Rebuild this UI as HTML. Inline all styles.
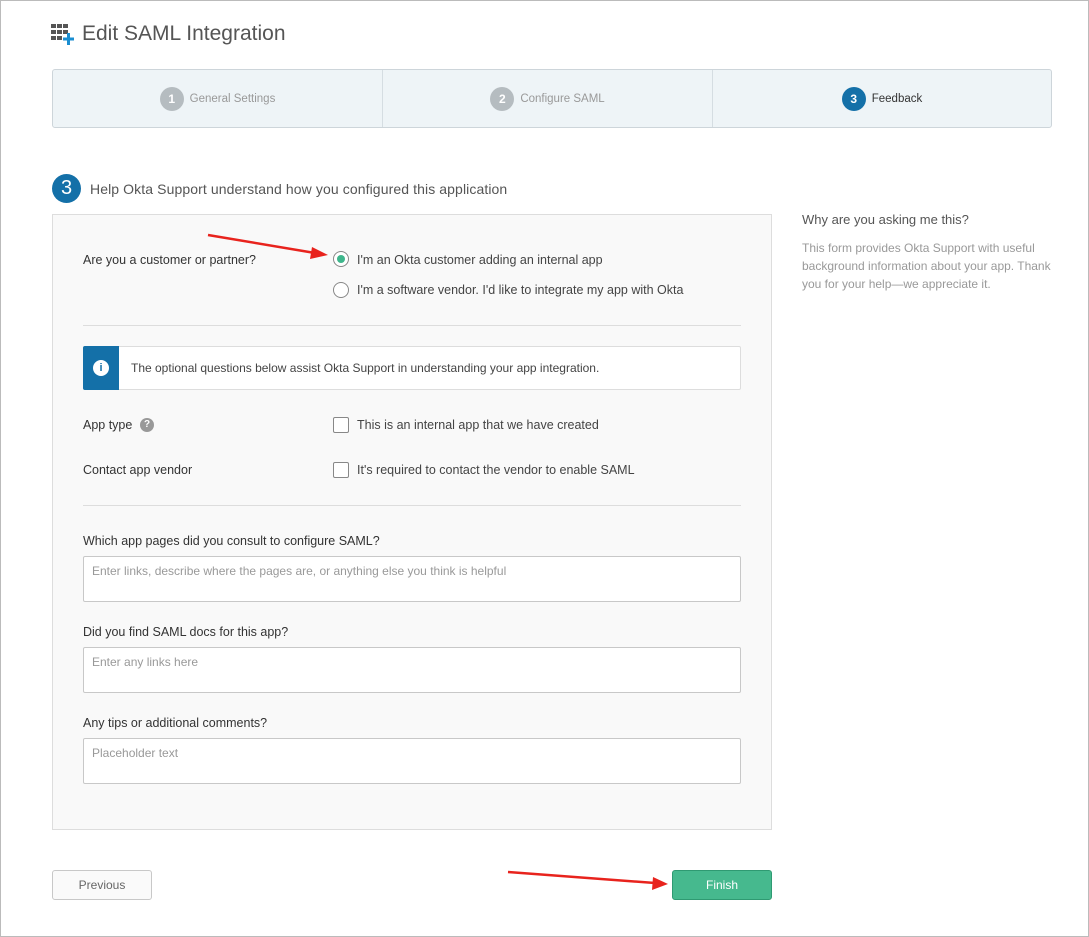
<!DOCTYPE html>
<html><head><style>
*{box-sizing:border-box;margin:0;padding:0}
body{width:1089px;height:937px;background:#fff;font-family:"Liberation Sans",sans-serif;position:relative;overflow:hidden}
.a{position:absolute}
.t{font-size:12.5px;color:#333}
.step{position:absolute;top:0;height:57px;display:flex;align-items:center;justify-content:center;font-size:11.5px;color:#999;border-right:1px solid #d5dde2}
.num{width:24px;height:24px;border-radius:50%;background:#b5bcc0;color:#fff;font-size:12px;font-weight:bold;display:flex;align-items:center;justify-content:center;margin-right:6px}
.radio{position:absolute;width:16px;height:16px;border:1px solid #888;border-radius:50%;background:#fff}
.cb{position:absolute;width:16px;height:16px;border:1px solid #888;background:#fff;border-radius:2px}
.ta{position:absolute;left:83px;width:658px;height:46px;border:1px solid #c8c8c8;background:#fff;border-radius:2px;font-size:12px;color:#999;padding:7px 8px}
.hr{position:absolute;left:83px;width:658px;height:1px;background:#ddd}
.gray{color:#999;font-size:12px}
</style></head><body>
<div class="a" style="left:0;top:0;width:1089px;height:937px;border:1px solid #bbb"></div>
<svg class="a" style="left:51px;top:24px" width="26" height="22"><g fill="#555"><rect x="0" y="0" width="5" height="4"/><rect x="6" y="0" width="5" height="4"/><rect x="12" y="0" width="5" height="4"/><rect x="0" y="6" width="5" height="4"/><rect x="6" y="6" width="5" height="4"/><rect x="12" y="6" width="5" height="4"/><rect x="0" y="12" width="5" height="4"/><rect x="6" y="12" width="5" height="4"/></g><rect x="16" y="9" width="3" height="12" fill="#1a8ed1"/><rect x="12" y="13.5" width="11" height="3" fill="#1a8ed1"/></svg>
<div class="a" style="left:82px;top:22px;font-size:21px;color:#555">Edit SAML Integration</div>
<div class="a" style="left:52px;top:69px;width:1000px;height:59px;background:#eef4f7;border:1px solid #cdd5da;border-radius:3px">
<div class="step" style="left:0;width:330px"><span class="num">1</span>General Settings</div>
<div class="step" style="left:330px;width:330px"><span class="num">2</span>Configure SAML</div>
<div class="step" style="left:660px;width:338px;border-right:none;color:#333"><span class="num" style="background:#1470a8">3</span>Feedback</div>
</div>
<div class="a" style="left:52px;top:174px;width:29px;height:29px;border-radius:50%;background:#1470a8;color:#fff;font-size:20px;display:flex;align-items:center;justify-content:center">3</div>
<div class="a" style="left:90px;top:181px;font-size:14px;color:#555;letter-spacing:0.1px">Help Okta Support understand how you configured this application</div>
<div class="a" style="left:52px;top:214px;width:720px;height:616px;background:#f9f9f9;border:1px solid #ddd"></div>
<div class="a t" style="left:83px;top:253px">Are you a customer or partner?</div>
<div class="radio" style="left:333px;top:251px"><div style="position:absolute;left:3px;top:3px;width:8px;height:8px;border-radius:50%;background:#3fb68c"></div></div>
<div class="a t" style="left:357px;top:253px;color:#444">I'm an Okta customer adding an internal app</div>
<div class="radio" style="left:333px;top:282px"></div>
<div class="a t" style="left:357px;top:283px;color:#444">I'm a software vendor. I'd like to integrate my app with Okta</div>
<div class="hr" style="top:325px"></div>
<div class="a" style="left:83px;top:346px;width:658px;height:44px;background:#fff;border:1px solid #ddd;border-radius:2px"></div>
<div class="a" style="left:83px;top:346px;width:36px;height:44px;background:#1470a8;border-radius:2px 0 0 2px"><div style="position:absolute;left:10px;top:14px;width:16px;height:16px;border-radius:50%;background:#fff;color:#1470a8;font-size:11px;font-weight:bold;text-align:center;line-height:16px">i</div></div>
<div class="a" style="left:131px;top:361px;font-size:12px;color:#444">The optional questions below assist Okta Support in understanding your app integration.</div>
<div class="a t" style="left:83px;top:418px">App type</div>
<div class="a" style="left:140px;top:418px;width:14px;height:14px;border-radius:50%;background:#999;color:#fff;font-size:10px;text-align:center;line-height:14px;font-weight:bold">?</div>
<div class="cb" style="left:333px;top:417px"></div>
<div class="a t" style="left:357px;top:418px;color:#444">This is an internal app that we have created</div>
<div class="a t" style="left:83px;top:463px">Contact app vendor</div>
<div class="cb" style="left:333px;top:462px"></div>
<div class="a t" style="left:357px;top:463px;color:#444">It's required to contact the vendor to enable SAML</div>
<div class="hr" style="top:505px"></div>
<div class="a t" style="left:83px;top:534px">Which app pages did you consult to configure SAML?</div>
<div class="ta" style="top:556px">Enter links, describe where the pages are, or anything else you think is helpful</div>
<div class="a t" style="left:83px;top:625px">Did you find SAML docs for this app?</div>
<div class="ta" style="top:647px">Enter any links here</div>
<div class="a t" style="left:83px;top:716px">Any tips or additional comments?</div>
<div class="ta" style="top:738px">Placeholder text</div>
<div class="a" style="left:802px;top:212px;font-size:13px;color:#555">Why are you asking me this?</div>
<div class="a gray" style="left:802px;top:239px;line-height:18px;width:250px">This form provides Okta Support with useful background information about your app. Thank you for your help—we appreciate it.</div>
<div class="a" style="left:52px;top:870px;width:100px;height:30px;border:1px solid #c8c8c8;border-radius:3px;background:#fafafa;font-size:12px;color:#666;text-align:center;line-height:28px">Previous</div>
<div class="a" style="left:672px;top:870px;width:100px;height:30px;border:1px solid #2f9a72;border-radius:3px;background:#46b98e;font-size:12px;color:#fff;text-align:center;line-height:28px">Finish</div>
<svg class="a" style="left:0;top:0" width="1089" height="937"><g stroke="#e8231d" stroke-width="2.5" fill="#e8231d"><line x1="208" y1="235" x2="315" y2="253"/><polygon points="328,255 312,247 310,259" stroke="none"/><line x1="508" y1="872" x2="655" y2="883"/><polygon points="668,884 653,877 652,890" stroke="none"/></g></svg>
</body></html>
